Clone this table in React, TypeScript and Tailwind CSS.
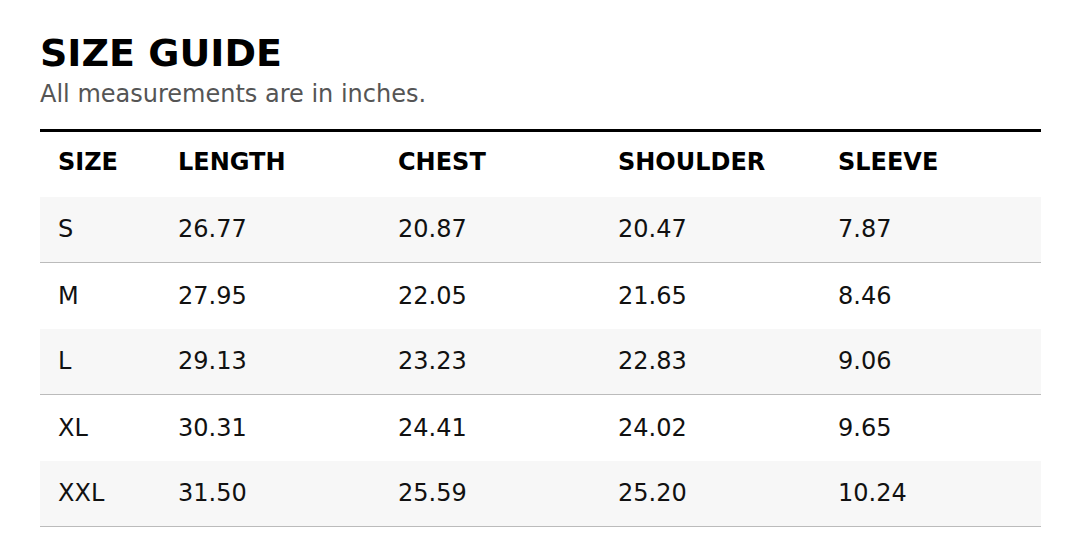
const columns = ["SIZE", "LENGTH", "CHEST", "SHOULDER", "SLEEVE"];

const rows = [
  ["S", "26.77", "20.87", "20.47", "7.87"],
  ["M", "27.95", "22.05", "21.65", "8.46"],
  ["L", "29.13", "23.23", "22.83", "9.06"],
  ["XL", "30.31", "24.41", "24.02", "9.65"],
  ["XXL", "31.50", "25.59", "25.20", "10.24"],
];

export default function App() {
  return (
    <div className="min-h-[560px] bg-white pl-10 pr-[30px] pt-8 font-['DejaVu_Sans',sans-serif] text-[#111]">
      <h1 className="text-[38px] font-bold leading-[43.6px] text-black">SIZE GUIDE</h1>
      <p className="text-[24px] leading-[1.5] text-[#555]">All measurements are in inches.</p>

      <div className="mt-[17px] border-t-[3px] border-black">
        <div className="grid h-[65px] grid-cols-[120px_220px_220px_220px_1fr] items-center pb-1 text-[24px] font-bold text-black">
          {columns.map((c) => (
            <div key={c} className="pl-[18px]">
              {c}
            </div>
          ))}
        </div>
        {rows.map((r, i) => (
          <div
            key={r[0]}
            className={
              i % 2 === 0
                ? "grid h-[66px] grid-cols-[120px_220px_220px_220px_1fr] items-center border-b border-[#bbb] bg-[#f7f7f7] text-[24px]"
                : "grid h-[66px] grid-cols-[120px_220px_220px_220px_1fr] items-center text-[24px]"
            }
          >
            {r.map((v, j) => (
              <div key={j} className="pl-[18px]">
                {v}
              </div>
            ))}
          </div>
        ))}
      </div>
    </div>
  );
}
